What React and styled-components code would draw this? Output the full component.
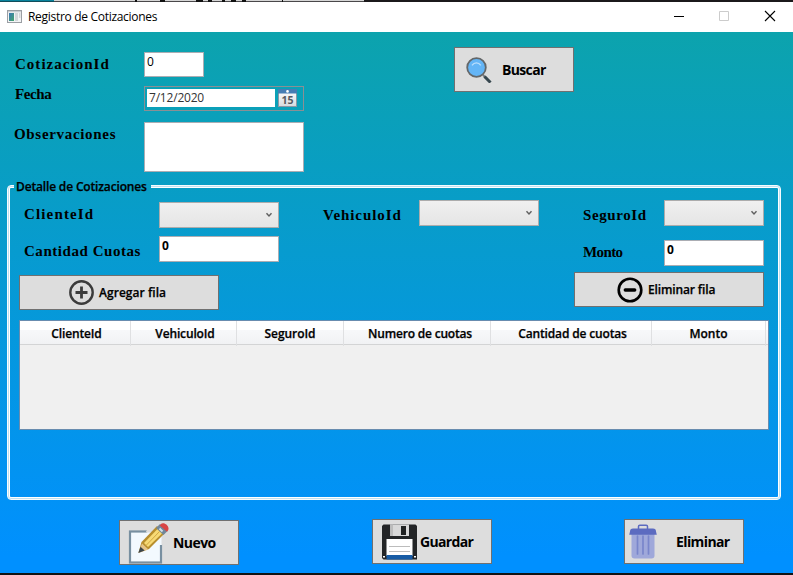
import React from 'react';
import styled, { createGlobalStyle } from 'styled-components';

const GlobalStyle = createGlobalStyle`
  * { box-sizing: border-box; }
  body { margin: 0; overflow: hidden; }
`;

const Desktop = styled.div`
  display: flex;
  flex-direction: column;
  width: 793px;
  height: 575px;
  background: #121314;
  font-family: 'Open Sans', 'Noto Sans', sans-serif;
  font-size: 12px;
  color: #000;
`;

const Backdrop = styled.div`
  display: flex;
  height: 2px;
  background: #1b191b;
  svg { display: block; }
`;

const TitleBar = styled.header`
  display: flex;
  align-items: center;
  height: 30px;
  padding: 0 16px 0 7px;
  background: #fff;
  > svg { margin-bottom: 2px; }
`;

const WindowTitle = styled.h1`
  flex: 1;
  margin: 0 0 0 6px;
  font-size: 12px;
  font-weight: 400;
  line-height: 30px;
  letter-spacing: -0.3px;
`;

const WindowControls = styled.div`
  display: flex;
  gap: 33px;
  margin: 0 1px 2px 0;
  svg { display: block; }
`;

const Content = styled.main`
  display: flex;
  flex-direction: column;
  height: 541px;
  background: linear-gradient(#0ca3ad 0%, #0090ff 97%);
`;

const Header = styled.section`
  display: flex;
  height: 153px;
`;

const Stack = styled.div`
  display: flex;
  flex-direction: column;
  align-items: flex-start;
  width: ${(p) => p.$width};
  padding-top: ${(p) => p.$top};
`;

const Label = styled.label`
  display: block;
  width: ${(p) => p.$width || 'auto'};
  margin: ${(p) => p.$margin || 0};
  padding-bottom: 2px;
  font: 700 15px/14px 'Liberation Serif', serif;
  letter-spacing: ${(p) => p.$spacing};
  white-space: nowrap;
`;

const TextBox = styled.div`
  width: ${(p) => p.$width};
  height: ${(p) => p.$height || '26px'};
  margin: ${(p) => p.$margin || 0};
  padding: 0 2px;
  border: 1px solid #abadb3;
  background: #fff;
  font-weight: ${(p) => (p.$bold ? 700 : 400)};
  line-height: 18px;
`;

const DatePicker = styled.div`
  display: flex;
  width: 160px;
  height: 25px;
  margin: 9px 0 11px;
  padding: 2px;
  border: 1px solid #8a8f94;
  svg { display: block; margin-left: 3px; }
`;

const DateValue = styled.div`
  width: 128px;
  height: 18px;
  padding-left: 2px;
  background: #fff;
  color: #333;
  line-height: 18px;
  letter-spacing: -0.2px;
`;

const Button = styled.button`
  display: flex;
  align-items: center;
  flex: none;
  width: ${(p) => p.$width};
  height: ${(p) => p.$height};
  margin: ${(p) => p.$margin || 0};
  padding: 0 0 0 ${(p) => p.$inset};
  border: 1px solid #707070;
  background: #ddd;
  color: #000;
  font-family: inherit;
  font-size: ${(p) => (p.$small ? '12px' : '14px')};
  font-weight: ${(p) => (p.$small ? 600 : 700)};
  letter-spacing: ${(p) => p.$spacing};
  white-space: nowrap;
  -webkit-text-stroke: ${(p) => (p.$small ? '0.25px #000' : '0')};
  svg { flex: none; display: block; margin-right: ${(p) => p.$gap}; }
`;

const GroupBox = styled.section`
  width: 774px;
  height: 315px;
  margin-left: 7px;
  padding: 0 12px;
  border: 1px solid #f4fbff;
  border-radius: 4px;
  box-shadow: inset 0 0 0 1px #bfe0f0, inset 0 0 0 2px #fff;
`;

const Legend = styled.h2`
  width: 137px;
  height: 14px;
  margin: -6px 0 0 -6px;
  padding-left: 2px;
  background: linear-gradient(#099dc3, #089dc5);
  font-size: 12px;
  font-weight: 600;
  line-height: 14px;
  letter-spacing: -0.16px;
  white-space: nowrap;
  -webkit-text-stroke: 0.25px #000;
`;

const Row = styled.div`
  display: flex;
  align-items: flex-start;
  height: ${(p) => p.$height};
  margin-top: ${(p) => p.$top || 0};
`;

const ComboBox = styled.div`
  display: flex;
  justify-content: flex-end;
  width: ${(p) => p.$width};
  height: 26px;
  margin: ${(p) => p.$margin || 0};
  padding: 9px 5px 0 0;
  border: 1px solid #acacac;
  background: linear-gradient(#f0f0f0, #e5e5e5);
`;

const DataGrid = styled.div`
  width: 750px;
  height: 110px;
  margin-left: -1px;
  border: 1px solid #688caf;
  background: #f0f0f0;
`;

const HeaderRow = styled.div`
  display: grid;
  grid-template-columns: 111px 106px 107px 147px 161px 114px 2px;
  height: 24px;
  border-bottom: 1px solid #d3d4d5;
  background: linear-gradient(#fff 0%, #fff 40%, #f7f8fa 41%, #f1f2f4 100%);
`;

const HeaderCell = styled.div`
  padding: 1px 0 0 ${(p) => p.$inset};
  border-right: 1px solid #dfe0e2;
  font-weight: 600;
  line-height: 24px;
  letter-spacing: ${(p) => p.$spacing};
  text-align: center;
  white-space: nowrap;
  -webkit-text-stroke: 0.25px #000;
`;

const Footer = styled.footer`
  display: flex;
  align-items: flex-start;
  padding: 19px 0 0 119px;
`;

const Chevron = () => (
  <svg width="8" height="6" viewBox="0 0 8 6" fill="none" stroke="#606060" strokeWidth="1.4">
    <path d="M1.5 1.2L4 4L6.5 1.2" />
  </svg>
);

const BackdropMarks = () => (
  <svg width="364" height="2">
    <path fill="#08829c" d="M0 0h54v1.500H0z" />
    <path fill="#d6d6d6" d="M54 0h310v1.300H54z" />
    <path fill="#111" d="M135 0h2v2h-2zM160 0h5v2h-5zM196 0h7v2h-7zM208 0h4v2h-4zM222 0h3v2h-3zM231 0h5v2h-5zM242 0h4v2h-4zM282 0h1v2h-1z" />
  </svg>
);

const AppIcon = () => (
  <svg width="15" height="13" viewBox="0 0 15 13">
    <defs>
      <linearGradient id="pane" x1="0" y1="0" x2="1" y2="1">
        <stop offset="0" stopColor="#3c78b8" />
        <stop offset="1" stopColor="#43a56b" />
      </linearGradient>
    </defs>
    <rect x=".5" y=".5" width="14" height="12" fill="#f3f4f5" stroke="#9b9fa4" />
    <path fill="#c9cdd1" d="M1 1h13v1.300H1z" />
    <rect x="2" y="3" width="5" height="8" fill="url(#pane)" />
    <path fill="#d4d7da" d="M8 3h3v8H8zM12 3h1.500v5H12z" />
  </svg>
);

const MinimizeIcon = () => (
  <svg width="12" height="12"><path fill="#000" d="M0 6h10v1H0z" /></svg>
);
const MaximizeIcon = () => (
  <svg width="12" height="12"><path fill="none" stroke="#ccc" d="M.5 1.500h9v9h-9z" /></svg>
);
const CloseIcon = () => (
  <svg width="12" height="12"><path stroke="#000" strokeWidth="1.100" d="M1 1l10 10M11 1L1 11" /></svg>
);

const CalendarIcon = () => (
  <svg width="19" height="18" viewBox="0 0 19 18">
    <defs>
      <linearGradient id="page" x1="0" y1="0" x2="0" y2="1">
        <stop offset="0" stopColor="#fff" />
        <stop offset="1" stopColor="#d7dade" />
      </linearGradient>
    </defs>
    <rect x=".5" y=".5" width="18" height="17" fill="url(#page)" stroke="#8b98a5" />
    <path fill="#457db4" d="M0 0h19v4.500H0z" />
    <circle cx="9.500" cy="2.400" r="1.300" fill="#fff" />
    <text x="9.500" y="14.700" textAnchor="middle" fontFamily="Open Sans" fontWeight="700" fontSize="10.500" fill="#555a60">15</text>
  </svg>
);

const SearchIcon = () => (
  <svg width="26" height="26" viewBox="0 0 26 26">
    <path stroke="#777c80" strokeWidth="2" d="M17 18l4 4" />
    <path stroke="#37474f" strokeWidth="3" d="M18.500 19.500l6 6" />
    <circle cx="10.500" cy="10.500" r="9.300" fill="#64b5f6" stroke="#646769" strokeWidth="1.800" />
    <path fill="none" stroke="#bbdefb" strokeWidth="1.300" d="M6 8.300c2.300-3.300 6.500-3.300 8.800 0" />
  </svg>
);

const PlusIcon = () => (
  <svg width="25" height="25" viewBox="0 0 25 25" fill="none" stroke="#3b3b3b" strokeWidth="2.400">
    <circle cx="12.500" cy="12.500" r="11.200" />
    <path strokeWidth="2.800" d="M12.500 6.500v12M6.500 12.500h12" />
  </svg>
);

const MinusIcon = () => (
  <svg width="26" height="26" viewBox="0 0 26 26" fill="none" stroke="#000">
    <circle cx="13" cy="13" r="11.300" strokeWidth="2.600" />
    <path strokeWidth="3.400" strokeLinecap="round" d="M8.300 13h9.400" />
  </svg>
);

const EditIcon = () => (
  <svg width="42" height="42" viewBox="0 0 42 42">
    <rect x="2" y="9.500" width="31" height="31" fill="#f3f9fe" stroke="#788fa0" strokeWidth="2.200" />
    <path fill="#f3f9fe" d="M20 8h14v15h-3V11H19z" />
    <path fill="#ddd" d="M19 8h16v14l-1.500 1V10.500H17.500z" />
    <path fill="#b88e2d" d="M13.500 20L29 4l7.500 7.500L21 27l-10.500 3.500z" />
    <path fill="#f7da75" d="M16 21L29.500 7l4.500 4.500L20 25z" />
    <path fill="none" stroke="#d1a743" d="M18 23.500L31.500 9.500" />
    <path fill="#e5c48a" d="M10.500 31l3.500-9.500 6.500 6z" />
    <path fill="#3b444b" d="M10.300 31l2.200-6.200 4.200 3.700z" />
    <path fill="#71879b" d="M28 6l4-4 7.500 7-4 4z" />
    <path stroke="#d4dfe8" strokeWidth="2" d="M31.500 6.500l3 3" />
    <path fill="#d94545" d="M32.500 2.500c3-3.500 10 1.700 7.500 6l-1 1.200-7.300-6.300z" />
  </svg>
);

const FloppyIcon = () => (
  <svg width="35" height="36" viewBox="0 0 35 36">
    <path fill="#232527" d="M1.500.5h32L35 2v33.500H1.500L0 34V2z" />
    <path fill="#d8d8d8" d="M8 .5h19V12H8z" />
    <path fill="#bcbcbc" d="M8 .5h3V12H8z" />
    <path fill="#202223" d="M19 2h5v9h-5z" />
    <path fill="#fff" d="M4.500 15h26v17h-26z" />
    <path fill="#175ba5" d="M4.500 31h26v4.500h-26z" />
    <path stroke="#bcbcbc" d="M7 22.500h21M7 27.500h21" />
    <path fill="#fff" d="M1 32h2v1.500H1zM32 32h2v1.500h-2z" />
  </svg>
);

const TrashIcon = () => (
  <svg width="28" height="35" viewBox="0 0 28 35">
    <path fill="#9fa8da" d="M2.500 9h23v22.500a3 3 0 0 1-3 3h-17a3 3 0 0 1-3-3z" />
    <path fill="none" stroke="#5c6bc0" strokeWidth="1.500" d="M9.500 5V2.500a1.300 1.300 0 0 1 1.300-1.300h6.400a1.300 1.300 0 0 1 1.300 1.300V5" />
    <path fill="#5c6bc0" d="M4 4.500h20a3 3 0 0 1 3 3l.8 3.300H.2l.8-3.300a3 3 0 0 1 3-3z" />
    <path stroke="#7986cb" strokeWidth="1.700" strokeLinecap="round" d="M8.500 12v18M14 12v18M19.500 12v18" />
  </svg>
);

const columns = [
  ['ClienteId', '-0.14px', '3px'],
  ['VehiculoId', '-0.14px', '3px'],
  ['SeguroId', '-0.05px', '0px'],
  ['Numero de cuotas', '-0.19px', '6px'],
  ['Cantidad de cuotas', '-0.15px', '3px'],
  ['Monto', '-0.05px', '0px'],
];

export default function App() {
  return (
    <Desktop>
      <GlobalStyle />
      <Backdrop><BackdropMarks /></Backdrop>
      <TitleBar>
        <AppIcon />
        <WindowTitle>Registro de Cotizaciones</WindowTitle>
        <WindowControls>
          <MinimizeIcon />
          <MaximizeIcon />
          <CloseIcon />
        </WindowControls>
      </TitleBar>
      <Content>
        <Header>
          <Stack $width="144px" $top="25px">
            <Label $margin="0 0 0 15px" $spacing="1.02px">CotizacionId</Label>
            <Label $margin="14px 0 0 15px" $spacing="-0.4px">Fecha</Label>
            <Label $margin="24px 0 0 14px" $spacing="0.68px">Observaciones</Label>
          </Stack>
          <Stack $width="310px" $top="20px">
            <TextBox $width="60px" $height="25px">0</TextBox>
            <DatePicker>
              <DateValue>7/12/2020</DateValue>
              <CalendarIcon />
            </DatePicker>
            <TextBox $width="160px" $height="50px" />
          </Stack>
          <Button $width="120px" $height="45px" $margin="15px 0 0" $inset="11px" $gap="10px" $spacing="-0.65px">
            <SearchIcon />Buscar
          </Button>
        </Header>
        <GroupBox>
          <Legend>Detalle de Cotizaciones</Legend>
          <Row $top="6px" $height="36px">
            <Label $width="135px" $margin="7px 0 0 4px" $spacing="1.15px">ClienteId</Label>
            <ComboBox $width="120px" $margin="2px 0 0"><Chevron /></ComboBox>
            <Label $width="96px" $margin="8px 0 0 44px" $spacing="0.93px">VehiculoId</Label>
            <ComboBox $width="120px"><Chevron /></ComboBox>
            <Label $width="81px" $margin="8px 0 0 44px" $spacing="0.58px">SeguroId</Label>
            <ComboBox $width="100px"><Chevron /></ComboBox>
          </Row>
          <Row $height="36px">
            <Label $width="135px" $margin="8px 0 0 4px" $spacing="0.54px">Cantidad Cuotas</Label>
            <TextBox $width="120px" $bold>0</TextBox>
            <Label $width="81px" $margin="9px 0 0 304px" $spacing="-0.6px">Monto</Label>
            <TextBox $width="100px" $margin="4px 0 0" $bold>0</TextBox>
          </Row>
          <Row $height="48px">
            <Button $small $width="200px" $height="35px" $margin="3px 0 0 -1px" $inset="49px" $gap="5px" $spacing="0.04px">
              <PlusIcon />Agregar fila
            </Button>
            <Button $small $width="190px" $height="35px" $margin="0 0 0 355px" $inset="42px" $gap="5px" $spacing="-0.14px">
              <MinusIcon />Eliminar fila
            </Button>
          </Row>
          <DataGrid>
            <HeaderRow>
              {columns.map(([name, spacing, inset]) => (
                <HeaderCell key={name} $spacing={spacing} $inset={inset}>{name}</HeaderCell>
              ))}
            </HeaderRow>
          </DataGrid>
        </GroupBox>
        <Footer>
          <Button $width="120px" $height="45px" $margin="1px 133px 0 0" $inset="8px" $gap="3px" $spacing="-0.55px">
            <EditIcon />Nuevo
          </Button>
          <Button $width="120px" $height="45px" $margin="0 132px 0 0" $inset="9px" $gap="3px" $spacing="-0.65px">
            <FloppyIcon />Guardar
          </Button>
          <Button $width="120px" $height="45px" $inset="4px" $gap="19px" $spacing="-0.6px">
            <TrashIcon />Eliminar
          </Button>
        </Footer>
      </Content>
    </Desktop>
  );
}
